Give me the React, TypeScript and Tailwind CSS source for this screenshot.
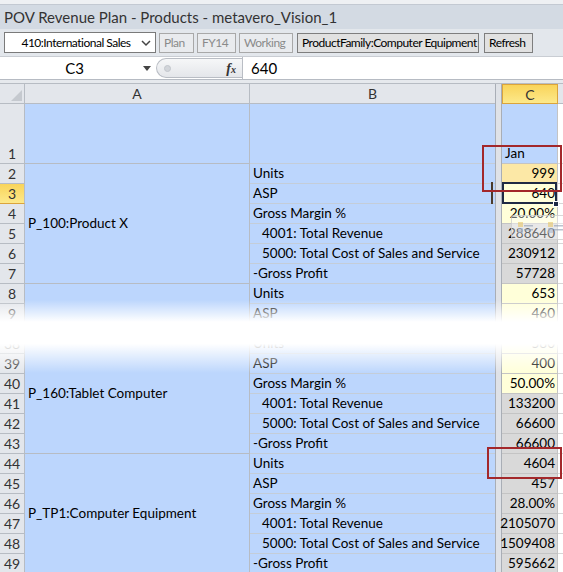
import React from 'react';

type Row = { n: string; h: number; b?: string; indent?: boolean; c?: string; bg?: string; sel?: boolean };

const YEL = 'bg-[#ffffd9]';
const GRY = 'bg-[#d9d9d9]';
const ORG = 'bg-[#fce8a6]';

const rows: Row[] = [
  { n: '1', h: 60, c: 'Jan', bg: 'bg-[#bcd6fd]' },
  { n: '2', h: 20, b: 'Units', c: '999', bg: ORG },
  { n: '3', h: 20, b: 'ASP', c: '640', bg: YEL, sel: true },
  { n: '4', h: 20, b: 'Gross Margin %', c: '20.00%', bg: YEL },
  { n: '5', h: 20, b: '4001: Total Revenue', indent: true, c: '288640', bg: GRY },
  { n: '6', h: 20, b: '5000: Total Cost of Sales and Service', indent: true, c: '230912', bg: GRY },
  { n: '7', h: 20, b: '-Gross Profit', c: '57728', bg: GRY },
  { n: '8', h: 20, b: 'Units', c: '653', bg: YEL },
  { n: '9', h: 20, b: 'ASP', c: '460', bg: YEL },
  { n: '', h: 10, b: '', c: '', bg: YEL },
  { n: '38', h: 20, b: 'Units', c: '580', bg: YEL },
  { n: '39', h: 20, b: 'ASP', c: '400', bg: YEL },
  { n: '40', h: 20, b: 'Gross Margin %', c: '50.00%', bg: YEL },
  { n: '41', h: 20, b: '4001: Total Revenue', indent: true, c: '133200', bg: GRY },
  { n: '42', h: 20, b: '5000: Total Cost of Sales and Service', indent: true, c: '66600', bg: GRY },
  { n: '43', h: 20, b: '-Gross Profit', c: '66600', bg: GRY },
  { n: '44', h: 20, b: 'Units', c: '4604', bg: GRY },
  { n: '45', h: 20, b: 'ASP', c: '457', bg: GRY },
  { n: '46', h: 20, b: 'Gross Margin %', c: '28.00%', bg: GRY },
  { n: '47', h: 20, b: '4001: Total Revenue', indent: true, c: '2105070', bg: GRY },
  { n: '48', h: 20, b: '5000: Total Cost of Sales and Service', indent: true, c: '1509408', bg: GRY },
  { n: '49', h: 20, b: '-Gross Profit', c: '595662', bg: GRY },
];

const groups = [
  { h: 60, label: '' },
  { h: 120, label: 'P_100:Product X' },
  { h: 50, label: '' },
  { h: 120, label: 'P_160:Tablet Computer' },
  { h: 120, label: 'P_TP1:Computer Equipment' },
];

const cellFont = "font-['Lato','Noto_Sans',sans-serif]";

function ToolBtn({ label, dim, w }: { label: string; dim?: boolean; w: string }) {
  return (
    <div
      className={`${w} h-[20px] flex items-center px-[4px] border text-[12px] tracking-[-0.5px] leading-none whitespace-nowrap overflow-hidden ${
        dim ? 'border-[#a8a8a8] bg-[#e9ebee] text-[#8a8a8a]' : 'border-[#7e7e7e] bg-[#e1e1e1] text-black'
      }`}
    >
      {label}
    </div>
  );
}

export default function App() {
  return (
    <div className="relative w-[563px] h-[572px] overflow-hidden bg-white font-['Lato','Noto_Sans',sans-serif]">
      {/* window top edge */}
      <div className="h-[5px] bg-[#eef0f3] border-b border-[#c3c9d2]" />

      {/* title */}
      <div className="h-[24px] bg-[#d3dae3] pl-[4px] text-[15px] leading-[24px] text-[#333] whitespace-nowrap">
        POV Revenue Plan - Products - metavero_Vision_1
      </div>

      {/* POV toolbar */}
      <div className="h-[27px] bg-[#e3e7ec] flex items-center gap-[3px] pl-[4px]">
        <div className="w-[152px] h-[21px] bg-white border border-[#7a7a7a] flex items-center text-[12px] tracking-[-0.5px] text-black">
          <span className="flex-1 text-center pl-[6px] whitespace-nowrap">410:International Sales</span>
          <svg width="10" height="8" viewBox="0 0 10 8" className="mr-[4px]">
            <path d="M1 2 L5 6 L9 2" fill="none" stroke="#444" strokeWidth="1.5" />
          </svg>
        </div>
        <ToolBtn label="Plan" dim w="w-[35px]" />
        <ToolBtn label="FY14" dim w="w-[39px]" />
        <ToolBtn label="Working" dim w="w-[54px]" />
        <ToolBtn label="ProductFamily:Computer Equipment" w="ml-[1px] w-[182px]" />
        <ToolBtn label="Refresh" w="ml-[2px] w-[49px]" />
      </div>

      {/* formula bar */}
      <div className="h-[24px] bg-white border-t border-[#c9cdd3] border-b border-b-[#b6bbc3] flex items-center">
        <div className="w-[156px] flex items-center">
          <span className="flex-1 text-center text-[15px] text-black pl-[6px]">C3</span>
          <svg width="8" height="5" viewBox="0 0 8 5" className="mr-[5px]">
            <path d="M0 0 H8 L4 5 Z" fill="#444" />
          </svg>
        </div>
        <div className="w-[86px] h-[20px] rounded-l-full border border-r-0 border-[#b9bdc4] bg-[linear-gradient(to_bottom,#f6f7f8,#e4e6ea)] flex items-center">
          <div className="ml-[7px] w-[7px] h-[7px] rounded-full bg-[#d2d5da] border border-[#c2c6cc]" />
          <span className="ml-auto mr-[6px] text-[14px] italic font-bold font-['Liberation_Serif',serif] text-[#333]">
            f<span className="text-[10px]">x</span>
          </span>
        </div>
        <div className="w-[1px] h-[22px] bg-[#b9bdc4]" />
        <span className="ml-[8px] text-[15px] text-black">640</span>
      </div>

      <div className="h-[3px] bg-[#e6e9ed]" />

      {/* column headers */}
      <div className={`flex h-[21px] bg-[#e3e6eb] border-t border-[#b7bcc3] text-[14px] text-[#333] ${cellFont}`}>
        <div className="w-[25px] border-r border-b border-[#b7bcc3] flex items-end justify-end p-[2px]">
          <svg width="11" height="11" viewBox="0 0 11 11">
            <path d="M11 0 V11 H0 Z" fill="#c5c9cf" />
          </svg>
        </div>
        <div className="w-[225px] border-r border-b border-[#b7bcc3] flex items-center justify-center">A</div>
        <div className="w-[245px] border-b border-[#b7bcc3] flex items-center justify-center">B</div>
        <div className="w-[7px] bg-[#dfe2e7] border-x border-[#a9aeb6]" />
        <div className="w-[56px] bg-[linear-gradient(to_bottom,#f9d45a,#fde98b)] border border-[#dba43c] flex items-center justify-center text-[#333]">
          C
        </div>
        <div className="flex-1 border-b border-[#b7bcc3]" />
      </div>

      {/* sheet body */}
      <div className={`flex ${cellFont} text-[13.5px]`}>
        {/* row numbers */}
        <div className="w-[25px] flex flex-col">
          {rows.map((r, i) => (
            <div
              key={i}
              style={{ height: r.h }}
              className={`border-r border-b border-[#b7bcc3] flex items-end justify-center text-[14px] text-[#333] leading-[19px] overflow-hidden ${
                r.sel ? 'bg-[linear-gradient(to_bottom,#f9d45a,#fde98b)] border-b-[#dba43c]' : 'bg-[#e3e6eb]'
              }`}
            >
              {r.n}
            </div>
          ))}
        </div>

        {/* column A, merged blocks */}
        <div className="w-[225px] flex flex-col">
          {groups.map((g, i) => (
            <div
              key={i}
              style={{ height: g.h }}
              className="bg-[#bcd6fd] border-r border-b border-[#b7bcc3] flex items-center pl-[3px] text-black"
            >
              {g.label}
            </div>
          ))}
        </div>

        {/* columns B, split, C, D */}
        <div className="flex-1 flex flex-col">
          {rows.map((r, i) => (
            <div key={i} style={{ height: r.h }} className="flex overflow-hidden">
              <div
                className={`w-[245px] bg-[#bcd6fd] border-b border-[#c4cdd8] flex items-end leading-[19px] text-black whitespace-nowrap ${
                  r.indent ? 'pl-[12px]' : 'pl-[3px]'
                }`}
              >
                {r.b}
              </div>
              <div className="w-[7px] bg-[#dfe2e7] border-x border-[#a9aeb6]" />
              <div
                className={`w-[56px] ${r.bg} border-r border-b border-[#c4c4c4] flex items-end leading-[19px] text-black whitespace-nowrap ${
                  i === 0 ? 'justify-start pl-[3px]' : 'justify-end pr-[2px]'
                }`}
              >
                {r.c}
              </div>
              <div className="flex-1 bg-white border-b border-[#d6d6d6]" />
            </div>
          ))}
        </div>
      </div>

      {/* active cell C3 */}
      <div className="absolute left-[502px] top-[182px] w-[55px] h-[22px] border-2 border-[#1f2a44]" />
      <div className="absolute left-[553px] top-[201px] w-[6px] h-[6px] bg-[#1f2a44] border border-white" />
      <div className="absolute left-[491px] top-[182px] w-[2px] h-[22px] bg-[#4b3b2b]" />

      {/* faded mini toolbar */}
      <div className="absolute left-[511px] top-[215px] w-[56px] h-[25px] rounded-[3px] border border-[#c8c8c8]/70 bg-white/40 flex items-center gap-[14px] pl-[6px]">
        {[0, 1].map((k) => (
          <svg key={k} width="16" height="12" viewBox="0 0 16 12" className="opacity-60">
            <rect x="0" y="0" width="5" height="5" fill="#e8c86a" />
            <rect x="0" y="6" width="5" height="5" fill="#a9b8d0" />
            <rect x="6" y="3" width="9" height="1.5" fill="#8e9bb0" />
            <rect x="6" y="7" width="9" height="1.5" fill="#8e9bb0" />
          </svg>
        ))}
      </div>

      {/* torn / faded break between rows 9 and 39 */}
      <div className="absolute left-0 top-[300px] w-full h-[73px] bg-[linear-gradient(to_bottom,rgba(255,255,255,0)_0%,#fff_30%,#fff_60%,rgba(255,255,255,0)_100%)]" />

      {/* red callouts */}
      <div className="absolute left-[482px] top-[145px] w-[80px] h-[47px] border-2 border-[#a3282b]" />
      <div className="absolute left-[487px] top-[447px] w-[75px] h-[32px] border-2 border-[#a3282b]" />
    </div>
  );
}
